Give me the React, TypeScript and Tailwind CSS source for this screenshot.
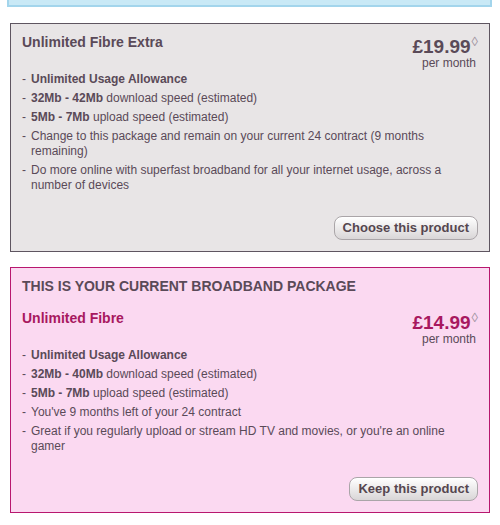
import React from "react";

const Item = ({ children }: { children: React.ReactNode }) => (
  <li className="flex mb-[4px] leading-[15px]">
    <span className="w-[9px] shrink-0">-</span>
    <span>{children}</span>
  </li>
);

const Price = ({ amount, pink }: { amount: string; pink?: boolean }) => (
  <div className="pt-[3px] text-right shrink-0">
    <div className="leading-[20px] flex justify-end items-start">
      <span className={`text-[19px] font-bold ${pink ? "text-[#a8185f]" : "text-[#5a4a58]"}`}>{amount}</span>
      <span className="text-[13px] leading-[12px] text-[#a093a0] -mt-[1px] ml-[1px]">◊</span>
    </div>
    <div className="text-[12px] leading-[12px] pr-[2px]">per month</div>
  </div>
);

const Btn = ({ label }: { label: string }) => (
  <div className="flex justify-end">
    <button className="h-[24px] px-[8px] rounded-[8px] border border-[#aaa5a8] bg-gradient-to-b from-[#ffffff] to-[#d9d6d7] text-[13px] font-bold text-[#55464f] leading-[20px] shadow-[inset_0_1px_0_#fff]">
      {label}
    </button>
  </div>
);

export default function App() {
  return (
    <div className="w-[500px] h-[525px] bg-white font-['Liberation_Sans',Arial,sans-serif] text-[#5a4a58] text-[12px]">
      <div className="mx-[7px] w-[485px] h-[7px] bg-[#c9e9f6] border-2 border-t-0 border-[#a3d5ec]" />

      <div className="mt-[16px] ml-[10px] w-[480px] border border-[#5e5560] bg-[#e8e5e6] pt-[10px] pb-[11px] pl-[11px] pr-[11px]">
        <div className="flex justify-between">
          <div className="text-[14px] font-bold leading-[16px]">Unlimited Fibre Extra</div>
          <Price amount="£19.99" />
        </div>
        <ul className="mt-[3px]">
          <Item><b>Unlimited Usage Allowance</b></Item>
          <Item><b>32Mb - 42Mb</b> download speed (estimated)</Item>
          <Item><b>5Mb - 7Mb</b> upload speed (estimated)</Item>
          <Item>Change to this package and remain on your current 24 contract (9 months remaining)</Item>
          <Item>Do more online with superfast broadband for all your internet usage, across a number of devices</Item>
        </ul>
        <div className="mt-[23px]">
          <Btn label="Choose this product" />
        </div>
      </div>

      <div className="mt-[15px] ml-[10px] w-[480px] border border-[#b8176f] bg-[#fbd9f1] pt-[10px] pb-[11px] pl-[11px] pr-[11px]">
        <div className="text-[14px] font-bold leading-[16px]">THIS IS YOUR CURRENT BROADBAND PACKAGE</div>
        <div className="flex justify-between mt-[16px]">
          <div className="text-[14px] font-bold leading-[16px] text-[#a8185f]">Unlimited Fibre</div>
          <Price amount="£14.99" pink />
        </div>
        <ul className="mt-[3px]">
          <Item><b>Unlimited Usage Allowance</b></Item>
          <Item><b>32Mb - 40Mb</b> download speed (estimated)</Item>
          <Item><b>5Mb - 7Mb</b> upload speed (estimated)</Item>
          <Item>You've 9 months left of your 24 contract</Item>
          <Item>Great if you regularly upload or stream HD TV and movies, or you're an online gamer</Item>
        </ul>
        <div className="mt-[23px]">
          <Btn label="Keep this product" />
        </div>
      </div>
    </div>
  );
}
